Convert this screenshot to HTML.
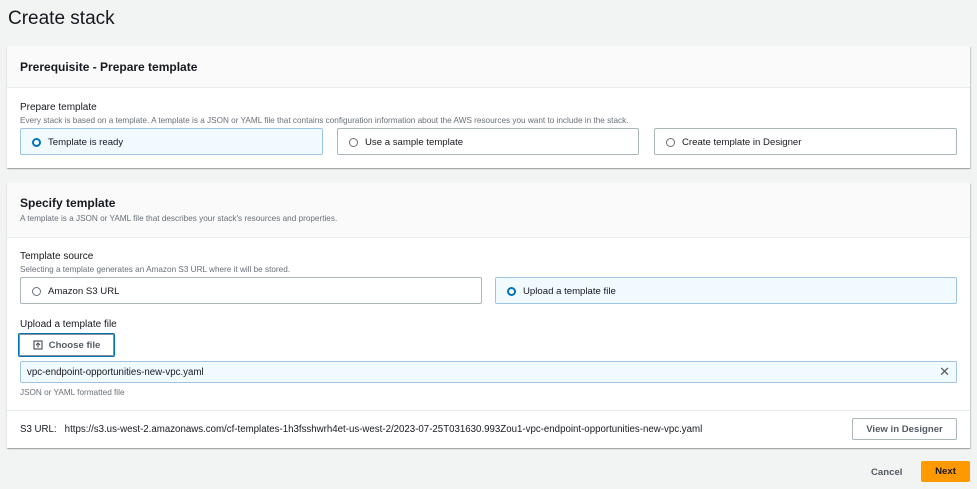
<!DOCTYPE html>
<html><head><style>
*{box-sizing:border-box;margin:0;padding:0}
body{width:977px;height:489px;background:#f2f3f3;font-family:"Liberation Sans",Arial,sans-serif;color:#16191f;position:relative;overflow:hidden}
.a{position:absolute}
h1{position:absolute;left:8px;top:8px;font-size:19px;font-weight:400;color:#16191f}
.card{position:absolute;left:7px;width:963px;background:#fff;box-shadow:0 1px 1px rgba(0,28,36,.3),1px 1px 1px rgba(0,28,36,.15)}
.hd{position:absolute;left:0;top:0;width:100%;background:#fafafa;border-bottom:1px solid #eaeded}
.t{font-size:12px;font-weight:700}
.lbl{font-size:10px;color:#16191f}
.sub{font-size:8.2px;color:#687078}
.box{position:absolute;border:1px solid #aab7b8;border-radius:2px;background:#fff;font-size:9.6px;display:flex;align-items:center;padding-left:11px;padding-top:2px}
.box.on{background:#f1faff;border-color:#9ec4e4}
.r{width:9px;height:9px;border-radius:50%;border:1px solid #687078;margin-right:7px;background:#fff;margin-top:-1px}
.on .r{border:2.5px solid #0073bb}
.btn{position:absolute;border:1px solid #545b64;border-radius:2px;background:#fff;font-size:9.6px;font-weight:700;color:#545b64;display:flex;align-items:center;justify-content:center}
</style></head><body>
<h1>Create stack</h1>
<div class="card" style="top:46px;height:122px">
 <div class="hd" style="height:42px"><div class="a t" style="left:13px;top:14px">Prerequisite - Prepare template</div></div>
 <div class="a lbl" style="left:13px;top:56px">Prepare template</div>
 <div class="a sub" style="left:13px;top:70px">Every stack is based on a template. A template is a JSON or YAML file that contains configuration information about the AWS resources you want to include in the stack.</div>
</div>
<div class="box on" style="left:20px;top:128px;width:303px;height:27px"><div class="r"></div>Template is ready</div>
<div class="box" style="left:337px;top:128px;width:302px;height:27px"><div class="r"></div>Use a sample template</div>
<div class="box" style="left:654px;top:128px;width:303px;height:27px"><div class="r"></div>Create template in Designer</div>

<div class="card" style="top:183px;height:265px">
 <div class="hd" style="height:55px"><div class="a t" style="left:13px;top:13px">Specify template</div>
 <div class="a sub" style="left:13px;top:31px">A template is a JSON or YAML file that describes your stack's resources and properties.</div></div>
 <div class="a lbl" style="left:13px;top:68px">Template source</div>
 <div class="a sub" style="left:13px;top:82px">Selecting a template generates an Amazon S3 URL where it will be stored.</div>
 <div class="a lbl" style="left:13px;top:136px">Upload a template file</div>
 <div class="a sub" style="left:13px;top:205px">JSON or YAML formatted file</div>
 <div class="a" style="left:0;top:227px;width:100%;border-top:1px solid #eaeded"></div>
 <div class="a" style="left:13px;top:241px;font-size:9.7px">S3 URL:&nbsp;&nbsp;&nbsp;https://s3.us-west-2.amazonaws.com/cf-templates-1h3fsshwrh4et-us-west-2/2023-07-25T031630.993Zou1-vpc-endpoint-opportunities-new-vpc.yaml</div>
</div>
<div class="box" style="left:20px;top:277px;width:462px;height:27px"><div class="r"></div>Amazon S3 URL</div>
<div class="box on" style="left:495px;top:277px;width:462px;height:27px"><div class="r"></div>Upload a template file</div>
<div class="btn" style="left:18px;top:333px;width:97px;height:24px;border:1px solid #0073bb;box-shadow:inset 0 0 0 1px #879196"><svg width="10" height="10" viewBox="0 0 10 10" style="margin-right:6px"><rect x="1" y="1" width="8" height="8" fill="none" stroke="#545b64" stroke-width="1.2"/><path d="M5 7.5V3M3 5l2-2 2 2" fill="none" stroke="#545b64" stroke-width="1.2"/></svg>Choose file</div>
<div class="a" style="left:20px;top:361px;width:937px;height:22px;background:#f1faff;border:1px solid #9ec4e4;border-radius:2px;font-size:9.7px;padding:5px 0 0 6px">vpc-endpoint-opportunities-new-vpc.yaml<span class="a" style="right:6px;top:2px;font-size:13px;color:#545b64">✕</span></div>
<div class="btn" style="left:852px;top:418px;width:105px;height:22px;border-color:#aab7b8">View in Designer</div>
<div class="a" style="left:871px;top:467px;font-size:9.6px;font-weight:700;color:#545b64">Cancel</div>
<div class="a" style="left:921px;top:461px;width:49px;height:21px;background:#ff9900;font-size:9.6px;font-weight:700;display:flex;align-items:center;justify-content:center;border-radius:2px">Next</div>
</body></html>
